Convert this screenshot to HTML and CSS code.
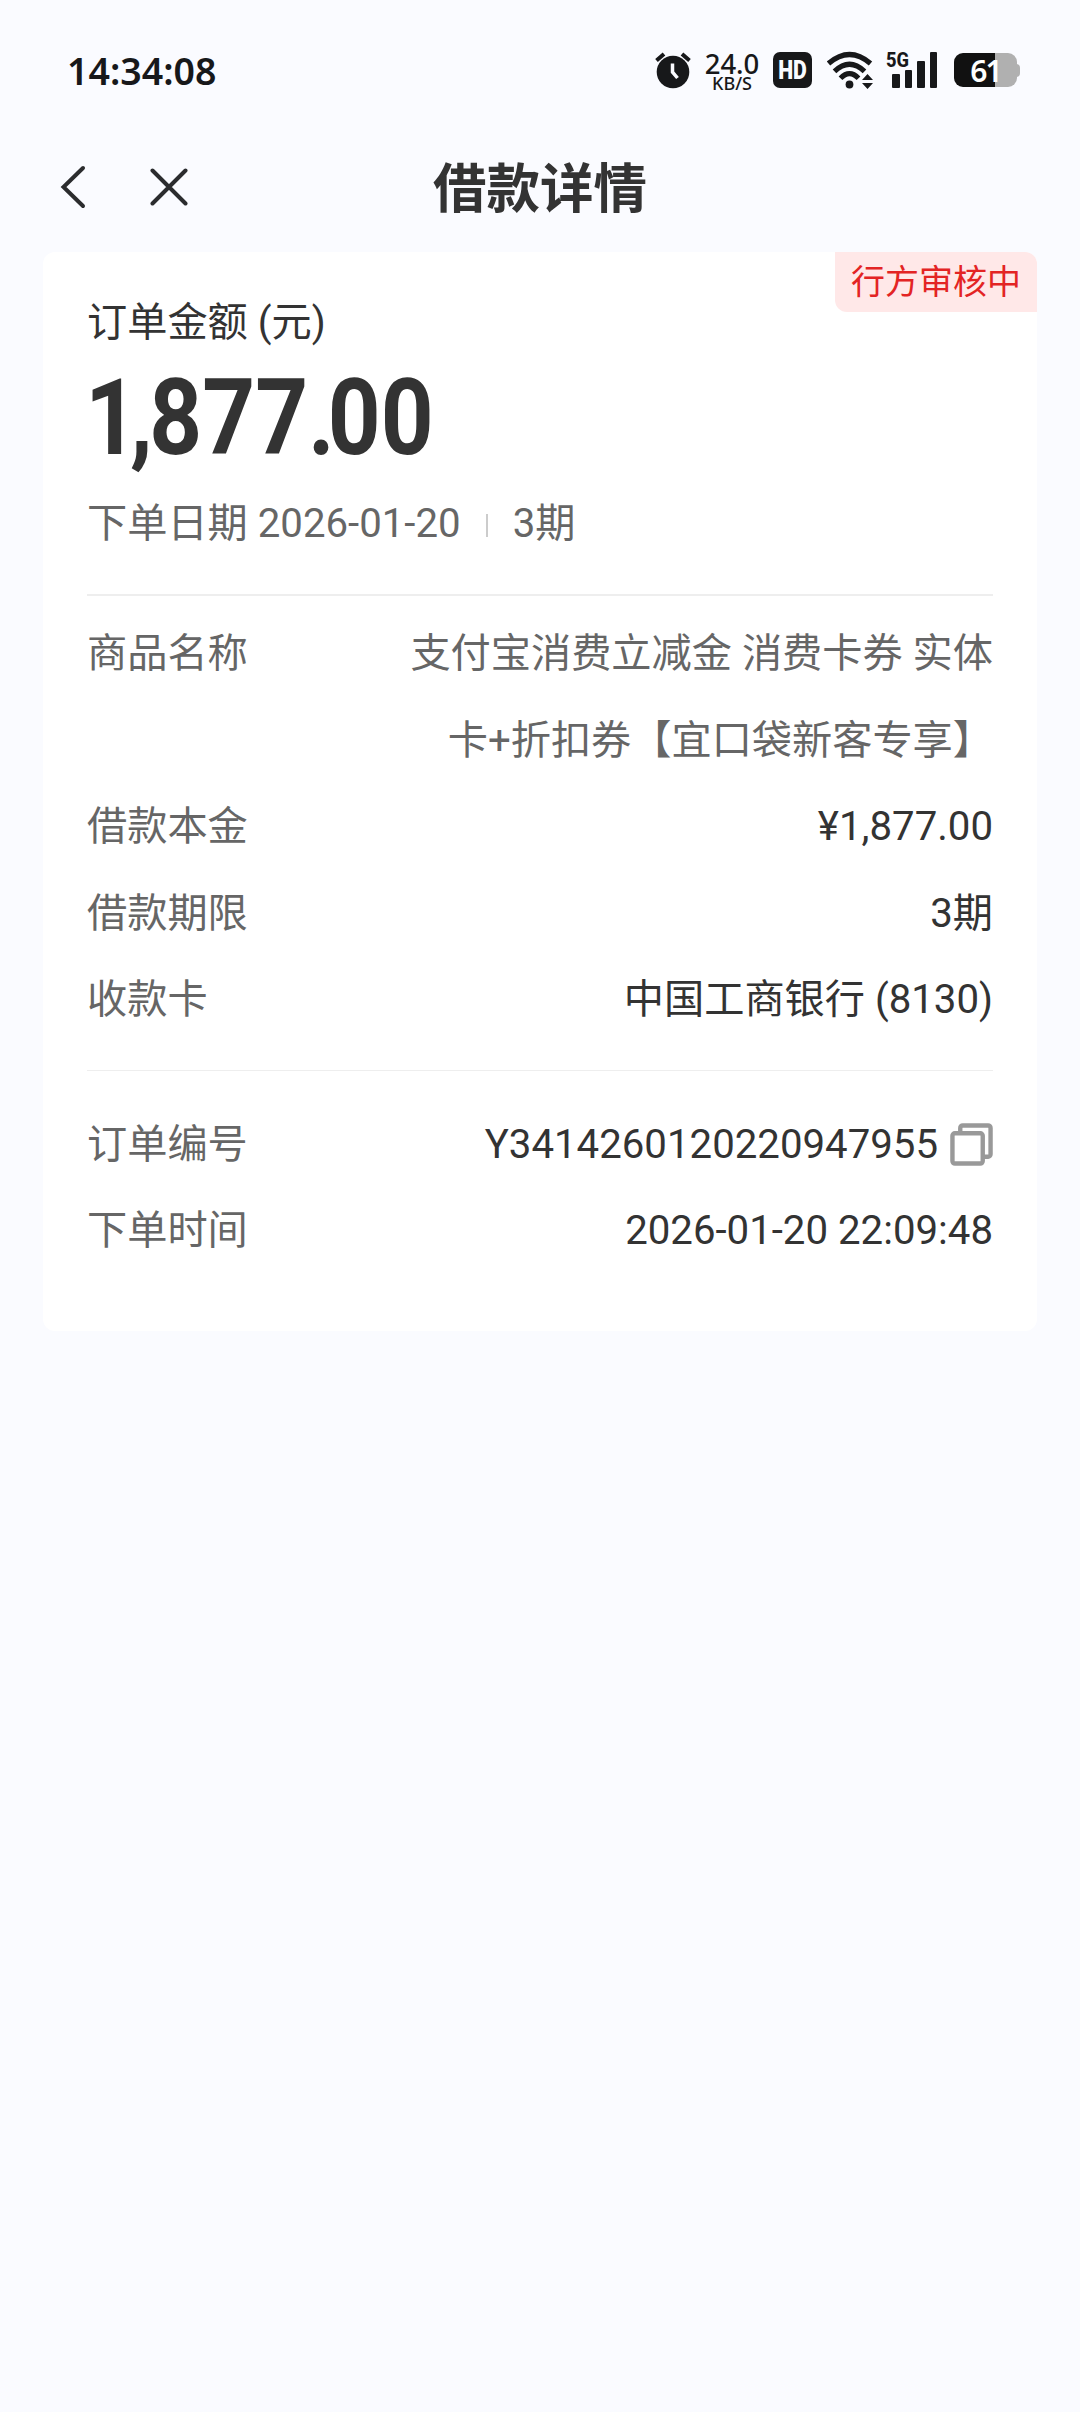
FILE: index.html
```html
<!DOCTYPE html>
<html lang="zh-CN">
<head>
<meta charset="UTF-8" />
<meta name="viewport" content="width=device-width, initial-scale=1" />
<title>借款详情</title>
<link rel="stylesheet" href="styles.css">
</head>
<body>

<div class="status-bar">
  <span class="time">14:34:08</span>
  <div class="status-icons">
    <svg class="alarm" width="36" height="38" viewBox="0 0 36 38">
      <circle cx="18" cy="21" r="16.3" fill="#17181a"/>
      <path d="M1.5 9.500 9 3M34.500 9.500 27 3" stroke="#17181a" stroke-width="4" fill="none"/>
      <path d="M17.500 12.500v8.500l5 6" stroke="#fafbff" stroke-width="3.500" fill="none"/>
    </svg>
    <div class="speed"><span class="num">24.0</span><span class="unit">KB/S</span></div>
    <span class="hd"><span>HD</span></span>
    <svg class="wifi" width="46" height="38" viewBox="0 0 46 38">
      <g fill="none" stroke="#17181a" stroke-width="5.200">
        <path d="M1.500 12.500Q22.500-5.500 43.500 12.500"/>
        <path d="M7.500 20.300Q22.500 6 37.500 20.300"/>
        <path d="M13.500 27.300Q22.500 18 31.500 27.300"/>
      </g>
      <circle cx="22.500" cy="33.500" r="3.900" fill="#17181a"/>
      <path d="M40.500 23l5.500 6h-11zM40.500 38l5.500-6h-11z" fill="#17181a"/>
    </svg>
    <div class="signal">
      <span class="net">5G</span>
      <i class="bar b1"></i><i class="bar b2"></i><i class="bar b3"></i><i class="bar b4"></i>
    </div>
    <div class="battery"><div class="level">61</div></div>
  </div>
</div>

<div class="nav">
  <svg class="back" width="26" height="44" viewBox="0 0 26 44">
    <path d="M23 3 3.500 22 23 41" fill="none" stroke="#2b2c2e" stroke-width="4" stroke-linecap="round"/>
  </svg>
  <svg class="close" width="38" height="38" viewBox="0 0 38 38">
    <path d="M2.500 2.500l33 33M35.500 2.500l-33 33" fill="none" stroke="#2b2c2e" stroke-width="4" stroke-linecap="round"/>
  </svg>
  <h1>借款详情</h1>
</div>

<div class="card">
  <span class="tag">行方审核中</span>
  <div class="summary">
    <div class="caption">订单金额 (元)</div>
    <div class="amount"><span class="one">1</span><span class="comma">,</span>877<span class="dot">.</span>00</div>
    <div class="meta"><span>下单日期 2026-01-20</span><i class="sep"></i><span>3期</span></div>
  </div>
  <div class="group">
    <div class="row"><span class="label">商品名称</span><span class="value gray">支付宝消费立减金 消费卡券 实体卡+折扣券【宜口袋新客专享】</span></div>
    <div class="row"><span class="label">借款本金</span><span class="value">¥1,877.00</span></div>
    <div class="row"><span class="label">借款期限</span><span class="value">3期</span></div>
    <div class="row"><span class="label">收款卡</span><span class="value">中国工商银行 (8130)</span></div>
  </div>
  <div class="group order">
    <div class="row">
      <span class="label">订单编号</span>
      <span class="value copyable">Y3414260120220947955
        <svg width="43" height="43" viewBox="0 0 44 44" fill="none" stroke="#999" stroke-width="4.500">
          <path d="M10.500 10V5a2.500 2.500 0 0 1 2.500-2.500h26A2.500 2.500 0 0 1 41.500 5v27a2.500 2.500 0 0 1-2.500 2.500h-5"/>
          <rect x="2.500" y="10.500" width="31" height="31" rx="2.500"/>
        </svg>
      </span>
    </div>
    <div class="row"><span class="label">下单时间</span><span class="value">2026-01-20 22:09:48</span></div>
  </div>
</div>

</body>
</html>
```
FILE: styles.css
```css
* {
  box-sizing: border-box;
}
body {
  margin: 0;
  min-height: 100vh;
  background: #fafbff;
  color: #333;
  font-family: Roboto, "Noto Sans CJK SC", sans-serif;
  font-size: 40.2px;
}
.status-bar {
  display: flex;
  justify-content: space-between;
  align-items: center;
  height: 140px;
  padding: 0 60px 0 67px;
  color: #17181a;
}
.time {
  padding-top: 2px;
  font-family: "Noto Sans", sans-serif;
  font-weight: 600;
  font-size: 37.5px;
  line-height: 44px;
}
.status-icons {
  display: flex;
  align-items: center;
}
.alarm {
  margin-right: 13px;
}
.speed {
  width: 56px;
  margin-right: 13px;
  padding-top: 5px;
  display: flex;
  flex-direction: column;
  align-items: center;
  font-family: "Noto Sans", sans-serif;
  font-weight: 500;
}
.num {
  font-size: 27.5px;
  line-height: 20px;
}
.unit {
  font-size: 18px;
  line-height: 18px;
}
.hd {
  width: 39px;
  height: 36px;
  margin-right: 15px;
  border-radius: 7px;
  background: #17181a;
  color: #fafbff;
  font-weight: 900;
  font-size: 25px;
  line-height: 37px;
  text-align: center;
}
.hd span {
  display: block;
  transform: scaleX(0.85);
}
.wifi {
  margin-right: 19px;
}
.signal {
  position: relative;
  display: flex;
  align-items: flex-end;
  gap: 5px;
  height: 36px;
  margin-right: 17px;
}
.net {
  position: absolute;
  left: -6px;
  top: -2px;
  font-size: 21px;
  font-weight: 800;
  line-height: 20px;
  transform: scaleX(0.87);
  transform-origin: left;
}
.bar {
  width: 7.5px;
  border-radius: 1px;
  background: #17181a;
}
.b1 { height: 14px; }
.b2 { height: 18px; }
.b3 { height: 27px; }
.b4 { height: 36px; }
.battery {
  position: relative;
  width: 63px;
  height: 34px;
  margin-right: 3px;
  border-radius: 9px;
  background: linear-gradient(90deg, #111 65%, #b0b0b0 65%);
}
.battery::after {
  content: "";
  position: absolute;
  left: 62px;
  top: 11px;
  width: 4px;
  height: 13px;
  border-radius: 0 4px 4px 0;
  background: #b0b0b0;
}
.level {
  color: #fff;
  font-family: "Noto Sans", sans-serif;
  font-weight: 600;
  font-size: 30px;
  line-height: 36px;
  letter-spacing: -2px;
  text-align: center;
}
.nav {
  position: relative;
  display: flex;
  align-items: center;
  height: 94px;
  padding-left: 60px;
}
.close {
  margin-left: 64px;
}
.nav h1 {
  position: absolute;
  left: 0;
  right: 0;
  margin: 0;
  padding-top: 5px;
  font-size: 53.5px;
  font-weight: 700;
  line-height: 80px;
  text-align: center;
  pointer-events: none;
}
.card {
  position: relative;
  height: 1079px;
  margin: 18px 43px 0;
  padding: 0 44px;
  border-radius: 12px;
  background: #fff;
}
.tag {
  position: absolute;
  top: 0;
  right: 0;
  width: 202px;
  height: 60px;
  border-radius: 0 12px 0 12px;
  background: #ffe8e8;
  color: #e32424;
  font-size: 34px;
  line-height: 60px;
  text-align: center;
}
.summary {
  height: 344px;
  padding-top: 43px;
  border-bottom: 2px solid #eee;
}
.caption {
  line-height: 56px;
}
.amount {
  height: 100px;
  margin: 17px 0 0 -2px;
  font-size: 106px;
  font-weight: 700;
  line-height: 101px;
  white-space: nowrap;
  transform: scaleX(0.87);
  transform-origin: left;
}
.one {
  letter-spacing: -9px;
}
.comma {
  letter-spacing: -4px;
}
.dot {
  letter-spacing: -8px;
}
.meta {
  display: flex;
  align-items: center;
  margin-top: 28px;
  color: #666;
  line-height: 56px;
}
.sep {
  width: 2px;
  height: 23px;
  margin: 2px 25px 0;
  background: #ccc;
}
.group {
  padding: 15px 0 26px;
}
.order {
  padding-top: 31px;
  border-top: 1px solid #eee;
}
.row {
  display: flex;
  justify-content: space-between;
  line-height: 86.5px;
}
.label {
  color: #666;
}
.value {
  max-width: 600px;
  text-align: right;
}
.value.gray {
  color: #666;
}
.copyable {
  display: flex;
  align-items: center;
  gap: 12px;
}
```
